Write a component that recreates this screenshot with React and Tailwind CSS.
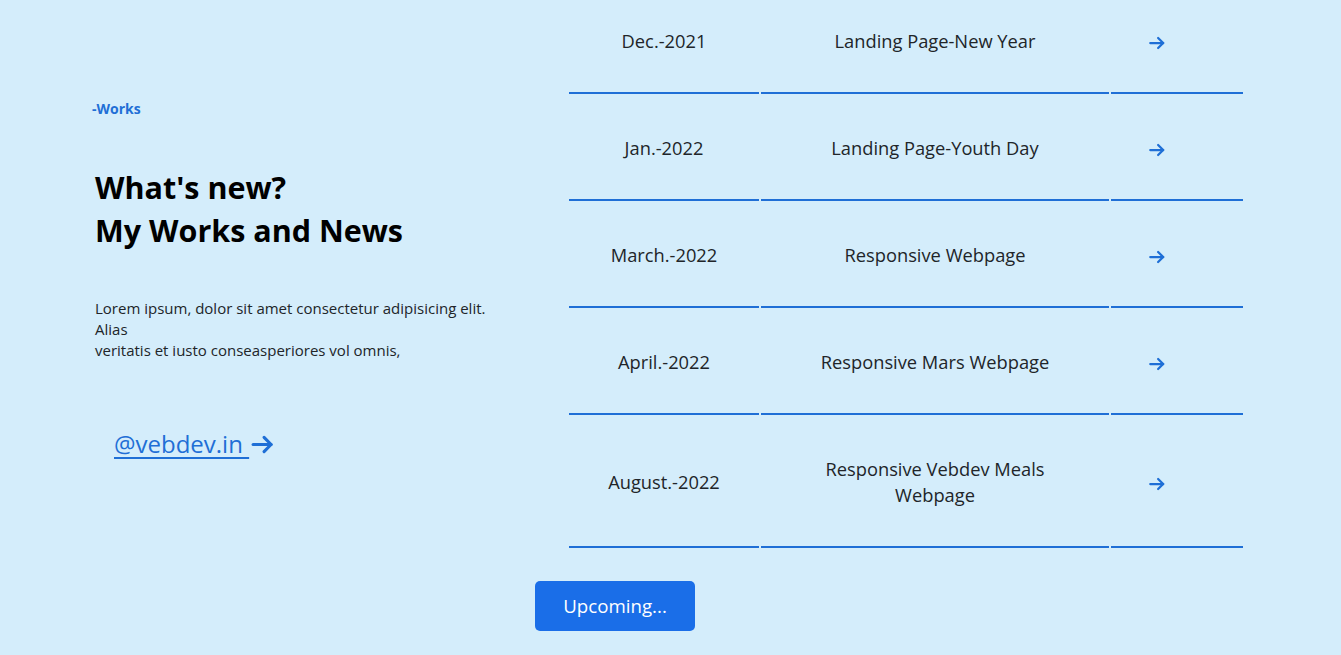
import React from "react";

const rows = [
  ["Dec.-2021", "Landing Page-New Year"],
  ["Jan.-2022", "Landing Page-Youth Day"],
  ["March.-2022", "Responsive Webpage"],
  ["April.-2022", "Responsive Mars Webpage"],
  ["August.-2022", "Responsive Vebdev Meals Webpage"],
];

function Arrow({ className }) {
  return (
    <svg viewBox="0 0 16 16" className={className} fill="none" stroke="currentColor" strokeWidth="2" strokeLinecap="round" strokeLinejoin="round">
      <path d="M2 8h11.5" />
      <path d="M9 3.5L13.5 8 9 12.5" />
    </svg>
  );
}

export default function App() {
  return (
    <div className="min-h-screen bg-[#d4edfb] text-[#212529] overflow-hidden" style={{ fontFamily: '"Open Sans", "Noto Sans", sans-serif' }}>
      <div className="flex">
        <div className="w-[567px] shrink-0 pl-[95px] pt-[99px]">
          <div className="text-[14px] leading-[20px] font-bold text-[#1f6fd6] -ml-[3px]">-Works</div>
          <h2 className="mt-[47px] text-[30.5px] leading-[43px] font-bold text-black">
            What's new?
            <br />
            My Works and News
          </h2>
          <p className="mt-[46px] w-[412px] text-[15px] leading-[21px]">
            Lorem ipsum, dolor sit amet consectetur adipisicing elit. Alias
            <br />
            veritatis et iusto conseasperiores vol omnis,
          </p>
          <div className="mt-[65px] ml-[19px] flex items-center text-[#1f6fd6]">
            <a href="#" className="text-[24px] leading-[36px] underline underline-offset-[4px] decoration-[1.5px]">
              @vebdev.in&nbsp;
            </a>
            <Arrow className="w-[25px] h-[25px] ml-[1px]" />
          </div>
        </div>
        <div className="-mt-[13px]">
          <table className="border-separate border-spacing-[2px] text-[18.3px] leading-[26px]">
            <tbody>
              {rows.map(([d, t], i) => (
                <tr key={i}>
                  <td className="w-[190px] border-b-2 border-[#1f6fd6] text-center pt-[39px] pb-[38px]">{d}</td>
                  <td className="w-[348px] border-b-2 border-[#1f6fd6] text-center pt-[39px] pb-[38px] px-[44px]">{t}</td>
                  <td className="w-[132px] border-b-2 border-[#1f6fd6] text-center pt-[39px] pb-[38px] pr-[40px]">
                    <Arrow className="inline-block w-[18px] h-[18px] text-[#1f6fd6] align-middle" />
                  </td>
                </tr>
              ))}
            </tbody>
          </table>
        </div>
      </div>
      <div className="ml-[535px] mt-[31px]">
        <button className="w-[160px] h-[50px] rounded-[5px] bg-[#1a6ee8] text-white text-[18.7px]">Upcoming...</button>
      </div>
    </div>
  );
}
